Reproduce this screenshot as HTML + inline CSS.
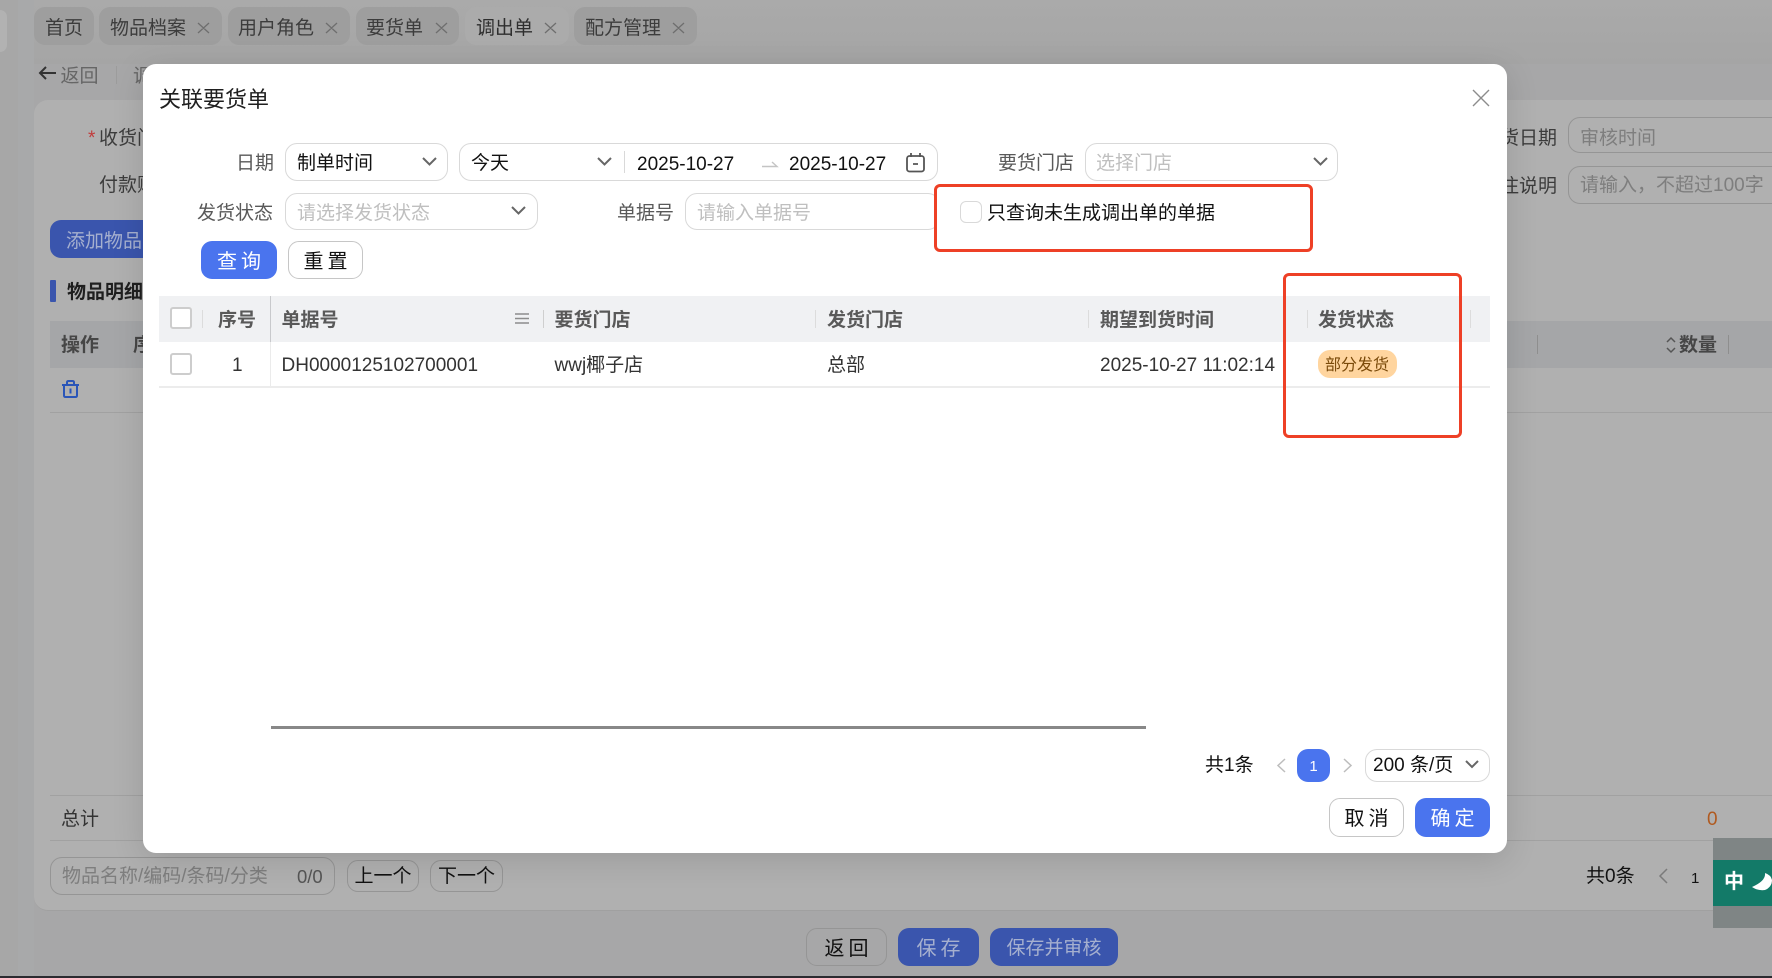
<!DOCTYPE html>
<html lang="zh-CN">
<head>
<meta charset="utf-8">
<title>关联要货单</title>
<style>
html,body{margin:0;padding:0;width:1772px;height:978px;overflow:hidden;background:#a7a7a8}
body{position:relative;font-family:"Liberation Sans","Noto Sans CJK SC",sans-serif;font-size:19px;color:#000}
div,span,svg{position:absolute;box-sizing:border-box}
.t{white-space:nowrap;line-height:30px;height:26px;font-size:19px}
.tab{top:7px;height:38px;background:#9e9e9e;border-radius:11px}
.tab.on{background:#ababab}
.tl{color:#3c3c3c}
.box{background:#fff;border:1.5px solid #d9d9d9;border-radius:12px}
.lab{color:#595959}
.ph{color:#bfbfbf}
.bg-in{border:1.5px solid #959595;border-radius:12px}
.btn{border-radius:11px;text-align:center;font-size:19px}
.ls{font-size:20px;letter-spacing:4px;padding-left:4px}
.th{font-weight:700;color:#595959}
.sep{width:1px;background:#dcdcdc}
.red{border:3.5px solid #ee4026;border-radius:6px}
svg{overflow:visible}
</style>
</head>
<body>
<!-- background layout -->
<div style="left:0;top:0;width:1772px;height:64px;background:linear-gradient(#aaaaaa,#a5a5a5)"></div>
<div style="left:0;top:0;width:18px;height:976px;background:#a7a7a7"></div>
<div style="left:18px;top:0;width:16px;height:976px;background:#a8a9aa"></div>
<div style="left:0;top:10px;width:7px;height:42px;background:#b2b2b2;border-radius:0 8px 8px 0"></div>
<div style="left:0;top:976px;width:1772px;height:2px;background:#2b2b30"></div>

<!-- tabs -->
<div class="tab" style="left:34px;width:60px"></div>
<div class="t tl" style="left:45px;top:14px">首页</div>
<div class="tab" style="left:99px;width:123px"></div>
<div class="t tl" style="left:110px;top:14px">物品档案</div>
<div class="tab" style="left:228px;width:122px"></div>
<div class="t tl" style="left:238px;top:14px">用户角色</div>
<div class="tab" style="left:356px;width:103px"></div>
<div class="t tl" style="left:366px;top:14px">要货单</div>
<div class="tab on" style="left:465px;width:104px"></div>
<div class="t tl" style="left:476px;top:14px;color:#2e2e2e">调出单</div>
<div class="tab" style="left:574px;width:123px"></div>
<div class="t tl" style="left:585px;top:14px">配方管理</div>
<svg style="left:0;top:0" width="700" height="50" fill="none" stroke="#6e6e6e" stroke-width="1.3">
<path d="M198 23l11 10M209 23l-11 10M326 23l11 10M337 23l-11 10M436 23l11 10M447 23l-11 10M545 23l11 10M556 23l-11 10M673 23l11 10M684 23l-11 10"/>
</svg>

<!-- back row -->
<svg style="left:38px;top:65px" width="20" height="16" fill="none" stroke="#333" stroke-width="2"><path d="M18 8H2M8 2L2 8l6 6"/></svg>
<div class="t" style="left:60.500px;top:62px;color:#666">返回</div>
<div style="left:116px;top:66px;width:1px;height:18px;background:#9c9c9c"></div>
<div class="t" style="left:133px;top:62px;color:#666">调</div>

<!-- card -->
<div style="left:34px;top:100px;width:1738px;height:811px;background:#b0b0b0;border-radius:14px 0 0 14px;border-bottom:1px solid #a0a0a0"></div>
<div class="t" style="left:88px;top:124px;color:#c23b3b">*</div>
<div class="t" style="left:99px;top:124px;color:#3c3c3c">收货门店</div>
<div class="t" style="left:99px;top:171px;color:#3c3c3c">付款账户</div>
<div style="left:50px;top:220px;width:120px;height:38px;background:#3a55ad;border-radius:11px"></div>
<div class="t" style="left:66px;top:227px;color:#a6b0cf">添加物品</div>
<div style="left:50px;top:280px;width:6px;height:22px;background:#3a55ad;border-radius:1px"></div>
<div class="t" style="left:67px;top:278px;font-weight:700;color:#1f1f1f">物品明细</div>

<div style="left:50px;top:321px;width:1722px;height:47px;background:#a5a6a8"></div>
<div class="t" style="left:61px;top:331px;font-weight:700;color:#464646">操作</div>
<div class="t" style="left:133px;top:331px;font-weight:700;color:#464646">序号</div>
<div style="left:1537px;top:335px;width:1px;height:19px;background:#8e8e8e"></div>
<div style="left:1728px;top:335px;width:1px;height:19px;background:#8e8e8e"></div>
<svg style="left:1665px;top:336px" width="12" height="18" fill="none" stroke="#555" stroke-width="1.5"><path d="M2 6l4-4 4 4M2 12l4 4 4-4"/></svg>
<div class="t" style="left:1679px;top:331px;font-weight:700;color:#464646">数量</div>
<svg style="left:61px;top:380px" width="20" height="18" fill="none" stroke="#2a55b8" stroke-width="2"><path d="M1 5h17M6 5V2.500Q6 1 7.500 1h4Q13 1 13 2.500V5M3 5v10.500Q3 17 4.500 17h10Q16 17 16 15.500V5M9.500 8.500v5"/></svg>
<div style="left:50px;top:412px;width:1722px;height:1px;background:#a1a1a1"></div>

<div style="left:50px;top:795px;width:1722px;height:1px;background:#a1a1a1"></div>
<div style="left:50px;top:840px;width:1722px;height:1px;background:#a1a1a1"></div>
<div class="t" style="left:61px;top:805px;color:#333">总计</div>
<div class="t" style="left:1707px;top:805px;color:#b05a20">0</div>

<!-- right side form behind -->
<div class="t" style="left:1500px;top:124px;color:#3c3c3c">货日期</div>
<div class="t" style="left:1500px;top:172px;color:#3c3c3c">注说明</div>
<div class="bg-in" style="left:1568px;top:117px;width:230px;height:36px"></div>
<div class="bg-in" style="left:1568px;top:166px;width:230px;height:38px"></div>
<div class="t" style="left:1580px;top:124px;color:#7e7e7e">审核时间</div>
<div class="t" style="left:1580px;top:171px;color:#7e7e7e">请输入，不超过100字</div>

<!-- bottom toolbar -->
<div class="bg-in" style="left:50px;top:857px;width:285px;height:38px"></div>
<div class="t" style="left:62px;top:862px;color:#7e7e7e">物品名称/编码/条码/分类</div>
<div class="t" style="left:297px;top:862px;color:#555;font-size:18.500px">0/0</div>
<div class="bg-in btn t" style="left:347px;top:860px;width:72px;height:32px;line-height:32px;color:#111">上一个</div>
<div class="bg-in btn t" style="left:430px;top:860px;width:73px;height:32px;line-height:32px;color:#111">下一个</div>
<div class="t" style="left:1586px;top:862px;color:#111">共0条</div>
<svg style="left:1658px;top:868px" width="11" height="16" fill="none" stroke="#7b7b7b" stroke-width="1.5"><path d="M9 1L2 8l7 7"/></svg>
<div class="t" style="left:1691px;top:864px;color:#111;font-size:15px">1</div>

<div class="bg-in btn t ls" style="left:806px;top:928px;width:81px;height:38px;line-height:40px;color:#111">返回</div>
<div class="btn t ls" style="left:898px;top:928px;width:81px;height:38px;line-height:42px;background:#3a55ad;color:#a6b0cf">保存</div>
<div class="btn t" style="left:990px;top:928px;width:128px;height:38px;line-height:42px;background:#3a55ad;color:#a6b0cf">保存并审核</div>

<!-- IME widget -->
<div style="left:1713px;top:838px;width:59px;height:90px;background:#7f8585"></div>
<div style="left:1713px;top:860px;width:59px;height:46px;background:#137a68"></div>
<div class="t" style="left:1724px;top:867px;color:#fff;font-weight:700;font-size:20px">中</div>
<svg style="left:1751px;top:872px" width="21" height="20"><path d="M14 1Q15 9 1 15Q7 19 14 18Q21 15 21 8Q20 3 14 1Z" fill="#fff"/></svg>

<!-- modal -->
<div style="left:143px;top:64px;width:1364px;height:789px;background:#fff;border-radius:13px;box-shadow:0 6px 32px rgba(0,0,0,.13)"></div>
<div class="t" style="left:159px;top:85px;font-size:22px;color:#1f1f1f">关联要货单</div>
<svg style="left:1472px;top:89px" width="18" height="18" fill="none" stroke="#8c8c8c" stroke-width="1.4"><path d="M1 1l16 16M17 1L1 17"/></svg>

<!-- row 1 -->
<div class="t lab" style="left:236px;top:149px">日期</div>
<div class="box" style="left:285px;top:143px;width:163px;height:38px"></div>
<div class="t" style="left:297px;top:149px;color:#111">制单时间</div>
<svg style="left:422px;top:157px" width="15" height="10" fill="none" stroke="#666" stroke-width="2"><path d="M1 1l6.500 6.500L14 1"/></svg>
<div class="box" style="left:459px;top:143px;width:479px;height:38px"></div>
<div class="t" style="left:471px;top:149px;color:#111">今天</div>
<svg style="left:597px;top:157px" width="15" height="10" fill="none" stroke="#666" stroke-width="2"><path d="M1 1l6.500 6.500L14 1"/></svg>
<div style="left:624px;top:151px;width:1px;height:22px;background:#d9d9d9"></div>
<div class="t" style="left:637px;top:150px;color:#111">2025-10-27</div>
<svg style="left:762px;top:159px" width="16" height="9" fill="none" stroke="#c4c4c4" stroke-width="1.400"><path d="M0 7.500H15L10 3"/></svg>
<div class="t" style="left:789px;top:150px;color:#111">2025-10-27</div>
<svg style="left:906px;top:153px" width="20" height="20" fill="none" stroke="#555" stroke-width="1.800"><rect x="1" y="3" width="17" height="15.500" rx="2.500"/><path d="M5 0v4M14 0v4M7 11h5"/></svg>
<div class="t lab" style="left:998px;top:149px">要货门店</div>
<div class="box" style="left:1085px;top:143px;width:253px;height:38px"></div>
<div class="t ph" style="left:1096px;top:149px">选择门店</div>
<svg style="left:1313px;top:157px" width="15" height="10" fill="none" stroke="#666" stroke-width="2"><path d="M1 1l6.500 6.500L14 1"/></svg>

<!-- row 2 -->
<div class="t lab" style="left:197px;top:199px">发货状态</div>
<div class="box" style="left:285px;top:193px;width:253px;height:37px"></div>
<div class="t ph" style="left:297px;top:199px">请选择发货状态</div>
<svg style="left:511px;top:206px" width="15" height="10" fill="none" stroke="#666" stroke-width="2"><path d="M1 1l6.500 6.500L14 1"/></svg>
<div class="t lab" style="left:617px;top:199px">单据号</div>
<div class="box" style="left:685px;top:193px;width:255px;height:37px"></div>
<div class="t ph" style="left:697px;top:199px">请输入单据号</div>

<!-- highlighted checkbox -->
<div style="left:936px;top:186px;width:375px;height:64px;background:#fff"></div>
<div class="box" style="left:960px;top:201px;width:22px;height:22px;border-radius:6px"></div>
<div class="t" style="left:987px;top:199px;color:#111">只查询未生成调出单的单据</div>
<div class="red" style="left:934px;top:184px;width:379px;height:68px"></div>

<!-- buttons -->
<div class="btn t ls" style="left:201px;top:241px;width:76px;height:38px;line-height:42px;background:#4a74ee;color:#fff">查询</div>
<div class="btn t ls" style="left:288px;top:241px;width:75px;height:38px;line-height:40px;background:#fff;border:1.5px solid #c6c6c6;color:#111">重置</div>

<!-- table -->
<div style="left:159px;top:296px;width:1331px;height:46px;background:#f0f1f3"></div>
<div style="left:159px;top:386px;width:1331px;height:1.500px;background:#ececec"></div>
<div style="left:270px;top:296px;width:1px;height:46px;background:#c8c9cc"></div>
<div style="left:270px;top:342px;width:1px;height:44px;background:#ebebeb"></div>
<div style="left:170px;top:307px;width:22px;height:22px;background:#fff;border:2px solid #cdcdcd;border-radius:3px"></div>
<div style="left:170px;top:353px;width:22px;height:22px;background:#fff;border:2px solid #cdcdcd;border-radius:3px"></div>
<div class="sep" style="left:202px;top:310px;height:18px"></div>
<div class="sep" style="left:543px;top:310px;height:18px;background:#cfcfcf"></div>
<div class="sep" style="left:815px;top:310px;height:18px"></div>
<div class="sep" style="left:1088px;top:310px;height:18px"></div>
<div class="sep" style="left:1307px;top:310px;height:18px"></div>
<div class="sep" style="left:1470px;top:310px;height:18px"></div>
<svg style="left:515px;top:313px" width="15" height="11" fill="none" stroke="#8c8c8c" stroke-width="1.400"><path d="M0 1h14M0 5.500h14M0 10h14"/></svg>

<div class="t th" style="left:218px;top:306px">序号</div>
<div class="t th" style="left:281.500px;top:306px">单据号</div>
<div class="t th" style="left:554.500px;top:306px">要货门店</div>
<div class="t th" style="left:827px;top:306px">发货门店</div>
<div class="t th" style="left:1100px;top:306px">期望到货时间</div>
<div class="t th" style="left:1318px;top:306px">发货状态</div>

<div class="t" style="left:232px;top:351px;color:#333">1</div>
<div class="t" style="left:281.500px;top:351px;color:#333">DH0000125102700001</div>
<div class="t" style="left:554.500px;top:351px;color:#333">wwj椰子店</div>
<div class="t" style="left:827px;top:351px;color:#333">总部</div>
<div class="t" style="left:1100px;top:351px;color:#333">2025-10-27 11:02:14</div>
<div style="left:1318px;top:350px;width:79px;height:28px;background:#ffd59f;border-radius:12px"></div>
<div class="t" style="left:1325px;top:351px;color:#7a4a0a;font-size:16px">部分发货</div>

<div class="red" style="left:1283px;top:273px;width:179px;height:165px"></div>

<!-- scrollbar -->
<div style="left:271px;top:726px;width:875px;height:3px;background:#888"></div>

<!-- pagination -->
<div class="t" style="left:1205px;top:751px;color:#111">共1条</div>
<svg style="left:1276px;top:758px" width="11" height="15" fill="none" stroke="#bdbdbd" stroke-width="1.500"><path d="M9 1L2 7.500 9 14"/></svg>
<div class="btn" style="left:1297px;top:749px;width:33px;height:33px;background:#4a74ee;color:#fff;font-size:15px;line-height:35px">1</div>
<svg style="left:1342px;top:758px" width="11" height="15" fill="none" stroke="#bdbdbd" stroke-width="1.500"><path d="M2 1l7 6.500L2 14"/></svg>
<div class="box" style="left:1365px;top:749px;width:125px;height:33px"></div>
<div class="t" style="left:1373px;top:751px;color:#111">200 条/页</div>
<svg style="left:1465px;top:760px" width="14" height="10" fill="none" stroke="#666" stroke-width="2"><path d="M1 1l6 6 6-6"/></svg>

<div class="btn t ls" style="left:1329px;top:798px;width:75px;height:39px;line-height:41px;background:#fff;border:1.500px solid #c6c6c6;color:#111">取消</div>
<div class="btn t ls" style="left:1415px;top:798px;width:75px;height:39px;line-height:43px;background:#4a74ee;color:#fff">确定</div>
</body>
</html>
